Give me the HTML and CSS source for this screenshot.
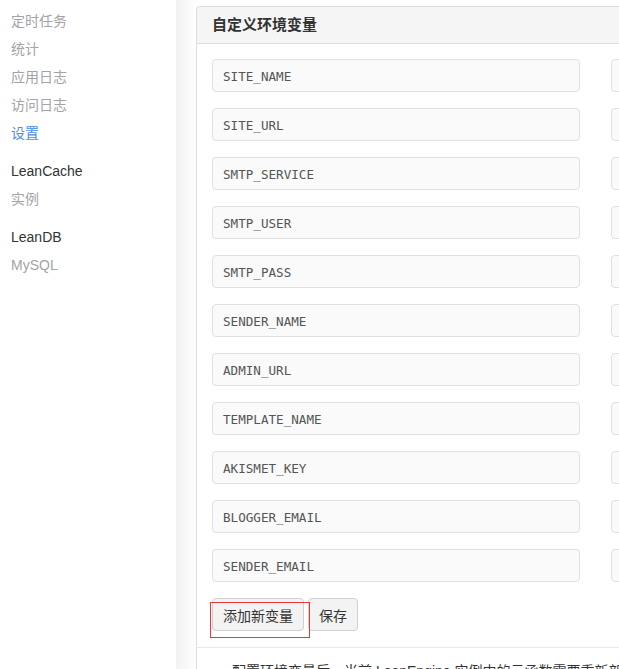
FILE: index.html
```html
<!DOCTYPE html>
<html lang="zh">
<head>
<meta charset="utf-8">
<link rel="stylesheet" href="styles.css">
</head>
<body>
<div class="page">
  <nav class="sidebar">
    <ul class="nav-group">
      <li class="nav-item">定时任务</li>
      <li class="nav-item">统计</li>
      <li class="nav-item">应用日志</li>
      <li class="nav-item">访问日志</li>
      <li class="nav-item active">设置</li>
    </ul>
    <div class="nav-title">LeanCache</div>
    <ul class="nav-group">
      <li class="nav-item">实例</li>
    </ul>
    <div class="nav-title">LeanDB</div>
    <ul class="nav-group">
      <li class="nav-item">MySQL</li>
    </ul>
  </nav>
  <main class="main">
    <section class="panel">
      <div class="panel-heading">自定义环境变量</div>
      <div class="panel-body">
        <div class="env-list">
          <div class="env-row"><div class="field">SITE_NAME</div><div class="field"></div></div>
          <div class="env-row"><div class="field">SITE_URL</div><div class="field"></div></div>
          <div class="env-row"><div class="field">SMTP_SERVICE</div><div class="field"></div></div>
          <div class="env-row"><div class="field">SMTP_USER</div><div class="field"></div></div>
          <div class="env-row"><div class="field">SMTP_PASS</div><div class="field"></div></div>
          <div class="env-row"><div class="field">SENDER_NAME</div><div class="field"></div></div>
          <div class="env-row"><div class="field">ADMIN_URL</div><div class="field"></div></div>
          <div class="env-row"><div class="field">TEMPLATE_NAME</div><div class="field"></div></div>
          <div class="env-row"><div class="field">AKISMET_KEY</div><div class="field"></div></div>
          <div class="env-row"><div class="field">BLOGGER_EMAIL</div><div class="field"></div></div>
          <div class="env-row"><div class="field">SENDER_EMAIL</div><div class="field"></div></div>
        </div>
        <div class="actions">
          <button class="btn">添加新变量</button>
          <button class="btn">保存</button>
          <span class="highlight"></span>
        </div>
      </div>
      <div class="panel-footer">配置环境变量后，当前 LeanEngine 实例中的云函数需要重新部署才能读取到新的数据值。</div>
    </section>
  </main>
</div>
</body>
</html>
```
FILE: styles.css
```css
html, body {
  margin: 0;
  padding: 0;
  background: #fff;
  overflow: hidden;
}
body {
  font-family: "Liberation Sans", "Noto Sans CJK SC", sans-serif;
  font-size: 14px;
  color: #333;
}
.page {
  display: flex;
  width: 1100px;
  height: 669px;
}
.sidebar {
  width: 176px;
  flex: none;
  padding: 7px 0 0 11px;
  box-sizing: border-box;
}
.nav-group {
  list-style: none;
  margin: 0 0 10px 0;
  padding: 0;
}
.nav-item {
  height: 28px;
  line-height: 28px;
  color: #a3a3a8;
}
.nav-item.active {
  color: #4a8de6;
}
.nav-title {
  height: 28px;
  line-height: 28px;
  color: #333;
}
.main {
  flex: 1;
  padding: 6px 0 0 20px;
  background: linear-gradient(to right, #f2f2f2 0, #f8f8f8 10px, #fff 20px);
}
.panel {
  border: 1px solid #ddd;
  border-right: none;
  border-bottom: none;
  border-top-left-radius: 4px;
  background: #fff;
  height: 100%;
}
.panel-heading {
  height: 36px;
  line-height: 36px;
  padding: 0 15px;
  background: #f5f5f5;
  border-bottom: 1px solid #ddd;
  border-top-left-radius: 4px;
  font-weight: bold;
  font-size: 15px;
  color: #333;
}
.panel-body {
  padding: 15px 15px 16px 15px;
}
.env-list {
  display: flex;
  flex-direction: column;
  gap: 16px;
}
.env-row {
  display: flex;
  gap: 31px;
}
.field {
  width: 368px;
  height: 33px;
  box-sizing: border-box;
  border: 1px solid #e0e0e0;
  border-radius: 4px;
  background: #fafafa;
  padding: 0 10px;
  line-height: 33px;
  font-family: "DejaVu Sans Mono", "Liberation Mono", monospace;
  font-size: 12.6px;
  color: #555;
}
.actions {
  position: relative;
  display: flex;
  gap: 4px;
  margin-top: 16px;
}
.btn {
  height: 33px;
  padding: 0 10px;
  border: 1px solid #d0d0d0;
  border-radius: 4px;
  background: #f3f3f3;
  font-family: "Liberation Sans", "Noto Sans CJK SC", sans-serif;
  font-size: 14px;
  color: #333;
}
.highlight {
  position: absolute;
  left: -2px;
  top: 4px;
  width: 98px;
  height: 34px;
  border: 1px solid #e53935;
  pointer-events: none;
}
.panel-footer {
  border-top: 1px solid #e8e8e8;
  padding: 12px 20px 0 35px;
  white-space: nowrap;
  color: #333;
}
```
